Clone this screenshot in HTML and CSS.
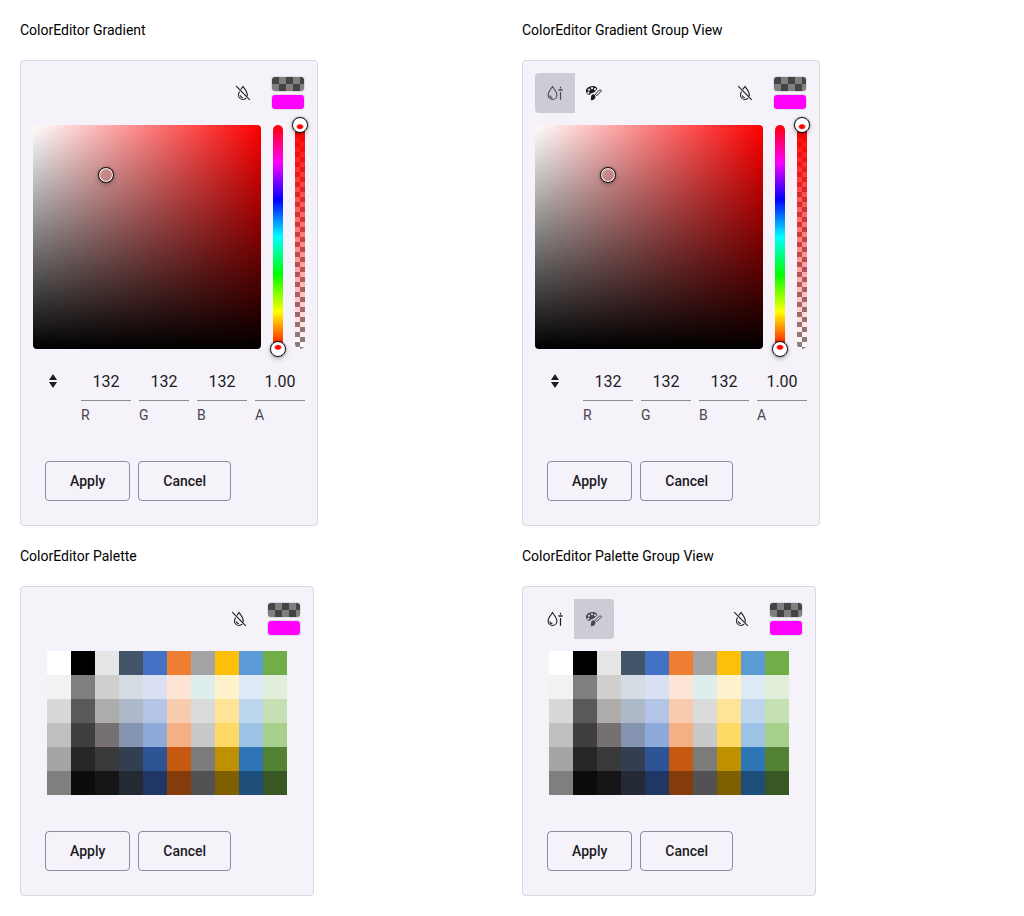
FILE: index.html
```
<!DOCTYPE html>
<html lang="en">
<head>
<meta charset="utf-8">
<title>ColorEditor</title>
<link rel="stylesheet" href="styles.css">
</head>
<body>
<svg class="sprite" aria-hidden="true">
  <symbol id="icon-clear" viewBox="0 0 16 16">
    <path fill="none" stroke="currentColor" stroke-width="1.1" d="M1.2 1.200l13.600 13.600M5.800 4.500L8 1.500c1.800 2.300 4.300 5.300 4.300 8.500 0 .4 0 .8-.1 1.100M4.500 6.500C3.900 7.700 3.500 8.900 3.500 10c0 2.600 2 4.500 4.500 4.500 1.300 0 2.400-.5 3.200-1.300M5.300 10.300c.2 1.300 1.100 2.200 2.500 2.400"/>
  </symbol>
  <symbol id="icon-gradient" viewBox="0 0 16 16">
    <path fill="none" stroke="currentColor" stroke-width="1.100" d="M5.500 1.700C7.200 4 9.900 7 9.900 10c0 2.600-1.900 4.500-4.400 4.500S1.100 12.600 1.100 10c0-3 2.700-6 4.400-8.300zM2.800 10.300c.2 1.400 1.200 2.400 2.700 2.500"/>
    <path fill="currentColor" d="M12.900 1.800h1.200v1.700h-1.200zM11.500 4.300h4v1.500h-4zM12.900 7h1.200v7.700h-1.200z"/>
  </symbol>
  <symbol id="icon-palette" viewBox="0 0 16 16">
    <path fill="currentColor" fill-rule="evenodd" d="M6.500 1C9 .8 10.900 2 11.400 4L8.300 7.300C7.100 7.500 6.800 8.100 5.500 8.200 4.300 8.400 4.600 9.800 3.200 9.800 1.300 9.700 0 8 0 6 0 3.200 3 1.200 6.500 1zM6 2a1.100 1.100 0 1 0 .1 0zM3 3.600a1.100 1.100 0 1 0 .1 0zM9 3a1.100 1.100 0 1 0 .1 0zM2.300 6.500a1.100 1.100 0 1 0 .1 0z"/>
    <path fill="currentColor" d="M7.200 9.300c1.300 0 2.200 1 2.200 2.500 0 2.200-1.800 3.800-4.900 3.500.9-.8.200-2.200.6-3.700.3-1.400 1-2.300 2.100-2.300z"/>
    <path fill="none" stroke="currentColor" stroke-width="1" d="M9.300 9.300l4-4.200c1-.9 2.500.3 1.600 1.400l-4.100 4.200z"/>
  </symbol>
  <symbol id="icon-sort" viewBox="0 0 16 16">
    <path fill="currentColor" d="M8 1l4 6H4zM4 9h8l-4 6z"/>
  </symbol>
</svg>

<main class="demo">
  <section class="example">
    <h2 class="title">ColorEditor Gradient</h2>
    <form class="editor">
      <header class="toolbar">
        <button class="tool clear" type="button" aria-label="Clear"><svg class="icon"><use href="#icon-clear"/></svg></button>
        <div class="preview"><span class="swatch checker"></span><span class="swatch current"></span></div>
      </header>
      <div class="view gradient-view">
        <div class="canvas">
          <div class="spectrum"><button class="thumb picker" type="button" aria-label="Color"></button></div>
          <div class="track hue"><button class="thumb at-end" type="button" aria-label="Hue"></button></div>
          <div class="track alpha"><button class="thumb at-start" type="button" aria-label="Opacity"></button></div>
        </div>
        <div class="channels">
          <button class="tool" type="button" aria-label="Toggle inputs"><svg class="icon"><use href="#icon-sort"/></svg></button>
          <label class="channel"><input class="value" value="132">R</label>
          <label class="channel"><input class="value" value="132">G</label>
          <label class="channel"><input class="value" value="132">B</label>
          <label class="channel"><input class="value" value="1.00">A</label>
        </div>
      </div>
      <footer class="actions"><button class="action" type="button">Apply</button><button class="action" type="button">Cancel</button></footer>
    </form>
  </section>

  <section class="example">
    <h2 class="title">ColorEditor Gradient Group View</h2>
    <form class="editor">
      <header class="toolbar">
        <div class="group">
          <button class="tool selected" type="button" aria-label="Gradient view"><svg class="icon"><use href="#icon-gradient"/></svg></button>
          <button class="tool" type="button" aria-label="Palette view"><svg class="icon"><use href="#icon-palette"/></svg></button>
        </div>
        <button class="tool clear" type="button" aria-label="Clear"><svg class="icon"><use href="#icon-clear"/></svg></button>
        <div class="preview"><span class="swatch checker"></span><span class="swatch current"></span></div>
      </header>
      <div class="view gradient-view">
        <div class="canvas">
          <div class="spectrum"><button class="thumb picker" type="button" aria-label="Color"></button></div>
          <div class="track hue"><button class="thumb at-end" type="button" aria-label="Hue"></button></div>
          <div class="track alpha"><button class="thumb at-start" type="button" aria-label="Opacity"></button></div>
        </div>
        <div class="channels">
          <button class="tool" type="button" aria-label="Toggle inputs"><svg class="icon"><use href="#icon-sort"/></svg></button>
          <label class="channel"><input class="value" value="132">R</label>
          <label class="channel"><input class="value" value="132">G</label>
          <label class="channel"><input class="value" value="132">B</label>
          <label class="channel"><input class="value" value="1.00">A</label>
        </div>
      </div>
      <footer class="actions"><button class="action" type="button">Apply</button><button class="action" type="button">Cancel</button></footer>
    </form>
  </section>

  <section class="example">
    <h2 class="title">ColorEditor Palette</h2>
    <form class="editor">
      <header class="toolbar">
        <button class="tool clear" type="button" aria-label="Clear"><svg class="icon"><use href="#icon-clear"/></svg></button>
        <div class="preview"><span class="swatch checker"></span><span class="swatch current"></span></div>
      </header>
      <div class="view palette-view"><div class="palette"></div></div>
      <footer class="actions"><button class="action" type="button">Apply</button><button class="action" type="button">Cancel</button></footer>
    </form>
  </section>

  <section class="example">
    <h2 class="title">ColorEditor Palette Group View</h2>
    <form class="editor">
      <header class="toolbar">
        <div class="group">
          <button class="tool" type="button" aria-label="Gradient view"><svg class="icon"><use href="#icon-gradient"/></svg></button>
          <button class="tool selected" type="button" aria-label="Palette view"><svg class="icon"><use href="#icon-palette"/></svg></button>
        </div>
        <button class="tool clear" type="button" aria-label="Clear"><svg class="icon"><use href="#icon-clear"/></svg></button>
        <div class="preview"><span class="swatch checker"></span><span class="swatch current"></span></div>
      </header>
      <div class="view palette-view"><div class="palette"></div></div>
      <footer class="actions"><button class="action" type="button">Apply</button><button class="action" type="button">Cancel</button></footer>
    </form>
  </section>
</main>
<script src="palette.js"></script>
</body>
</html>
```
FILE: styles.css
```
* {
  box-sizing: border-box;
}

body {
  margin: 0;
  padding: 20px;
  background: #fff;
  color: #000;
  font-family: Roboto, "Liberation Sans", sans-serif;
  font-size: 14px;
  line-height: 20px;
}

button,
input {
  margin: 0;
  padding: 0;
  border: 0;
  background: none;
  color: inherit;
  font: inherit;
}

.sprite {
  position: absolute;
  width: 0;
  height: 0;
}

.demo {
  display: grid;
  grid-template-columns: 1fr 1fr;
  gap: 20px;
}

.title {
  margin: 0 0 20px;
  font-size: 14px;
  font-weight: 400;
}

.editor {
  display: flex;
  flex-direction: column;
  width: fit-content;
  border: 1px solid #d8d6df;
  border-radius: 4px;
  background: #f5f2fa;
  color: #1c1b1f;
}

.toolbar {
  display: flex;
  align-items: center;
  padding: 12px 12px 0;
}

.group {
  display: flex;
}

.tool {
  display: flex;
  align-items: center;
  justify-content: center;
  width: 40px;
  height: 40px;
}

.group .tool:first-child {
  border-radius: 4px 0 0 4px;
}

.group .tool:last-child {
  margin-left: -1px;
  border-radius: 0 4px 4px 0;
}

.tool.selected {
  background: #cecbd5;
  color: #49454e;
}

.clear {
  margin-left: auto;
}

.icon {
  width: 16px;
  height: 16px;
}

.preview {
  display: flex;
  flex-direction: column;
  gap: 2px;
  margin-left: 8px;
}

.swatch {
  width: 34px;
  height: 16px;
  border: 1px solid rgba(28, 27, 31, 0.1);
  border-radius: 4px;
  background-clip: padding-box;
}

.checker {
  background: conic-gradient(#7f7f7f 25%, #444 0 50%, #7f7f7f 0 75%, #444 0) 0 0 / 14px 14px padding-box;
}

.current {
  background-color: #f0f;
}

.view {
  padding: 12px;
}

.gradient-view {
  display: flex;
  flex-direction: column;
  gap: 12px;
}

.canvas {
  display: flex;
  gap: 12px;
  height: 224px;
}

.spectrum,
.track {
  position: relative;
}

.spectrum {
  flex: 1;
  border-radius: 4px;
  background: linear-gradient(to top, #000, transparent), linear-gradient(to right, #fff, #f00);
}

.track {
  width: 10px;
  border-radius: 5px;
}

.hue {
  background: linear-gradient(to top, #f00, #ff0, #0f0, #0ff, #00f, #f0f, #f00);
}

.alpha {
  background: linear-gradient(to bottom, #f00, transparent), conic-gradient(#fff 25%, #8c7e80 0 50%, #fff 0 75%, #8c7e80 0) center / 10px 10px;
}

.thumb {
  position: absolute;
  width: 16px;
  height: 16px;
  border: 1px solid #111;
  border-radius: 50%;
  box-shadow: inset 0 0 0 1px #fff, 0 0 1px #000, 0 2px 5px rgba(0, 0, 0, 0.25);
  transform: translate(-50%, -50%);
}

.picker {
  left: 32%;
  top: 22.4%;
}

.at-start,
.at-end {
  left: 50%;
  background: radial-gradient(ellipse 4px 3px at 50% 62%, #f00 60%, #fff);
}

.at-start {
  top: 0;
}

.at-end {
  top: 100%;
  background: radial-gradient(ellipse 4px 3px at 50% 38%, #f00 60%, #fff);
}

.channels {
  display: flex;
  gap: 8px;
}

.channel {
  display: flex;
  flex-direction: column;
  gap: 4px;
  width: 50px;
  color: #49454e;
}

.value {
  width: 100%;
  height: 40px;
  padding-top: 1px;
  border-bottom: 1px solid #8f8d95;
  color: #1c1b1f;
  font-size: 16px;
  line-height: 24px;
  text-align: center;
}

.palette-view {
  padding: 12px 26px;
}

.palette {
  display: grid;
  grid-template-columns: repeat(10, 24px);
  grid-auto-rows: 24px;
}

.actions {
  display: flex;
  gap: 8px;
  padding: 24px;
}

.action {
  height: 40px;
  padding: 0 24px;
  border: 1px solid #8f8b9f;
  border-radius: 4px;
  font-weight: 500;
}
```
FILE: palette.js
```
const colors = [
  "#ffffff", "#000000", "#e6e6e6", "#435569", "#4371c4", "#ed7e32", "#a4a4a4", "#febf08", "#5b9bd5", "#71ae48",
  "#f2f2f2", "#7f7f7f", "#d1cfcd", "#d6dce3", "#dae0f3", "#fde4d5", "#deeeed", "#fff1cc", "#deeaf6", "#e1eed9",
  "#d7d9d8", "#585a59", "#aeacaa", "#adb9c9", "#b4c4e7", "#f6cbae", "#dbdbdb", "#ffe397", "#bcd6ee", "#c5e0b3",
  "#bfbfbf", "#3f3f3f", "#767170", "#8594b0", "#8eaadb", "#f4b084", "#c9c9c9", "#ffd965", "#9cc3e5", "#a8d08d",
  "#a5a5a5", "#262624", "#393939", "#333f50", "#2e5496", "#c55911", "#7b7b79", "#bf9000", "#2e75b5", "#538233",
  "#7f7f7f", "#0b0c0b", "#161616", "#232a33", "#203764", "#843c0b", "#525252", "#7f6000", "#1d4e79", "#385723"
];

document.querySelectorAll(".palette").forEach((palette) => {
  colors.forEach((color) => {
    const cell = document.createElement("button");
    cell.type = "button";
    cell.setAttribute("aria-label", color);
    cell.style.backgroundColor = color;
    palette.append(cell);
  });
});
```
